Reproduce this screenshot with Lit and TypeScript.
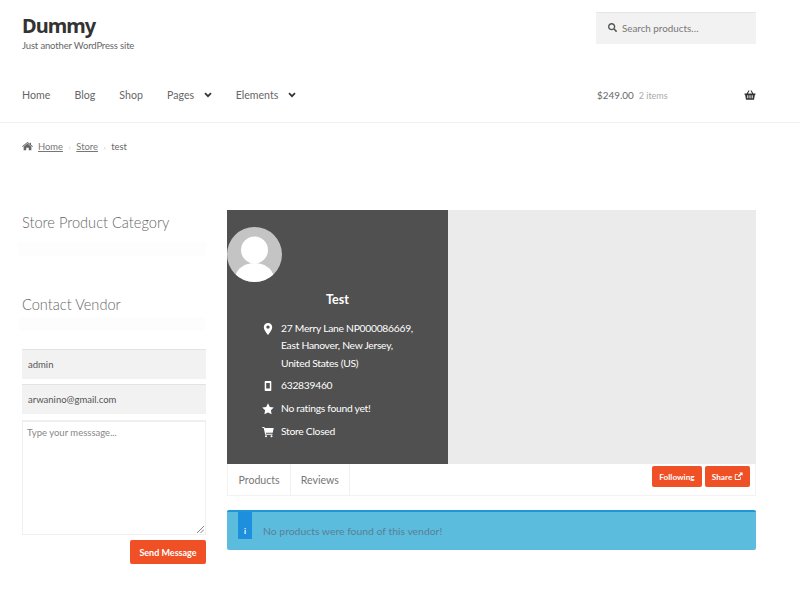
import { LitElement, html, css } from "lit";
import { customElement } from "lit/decorators.js";

@customElement("app-root")
export class AppRoot extends LitElement {
  static styles = css`
    :host { display: block; width: 800px; height: 590px; overflow: hidden; background: #fff; font-family: "Lato", "Noto Sans", sans-serif; color: #43454b; font-size: 11px; }
    * { box-sizing: border-box; }
    svg { display: block; fill: currentColor; }
    .masthead { padding: 0 44px 0 22px; border-bottom: 1px solid #f0f0f0; height: 123px; }
    .top { display: flex; justify-content: space-between; height: 72px; }
    .brand { padding-top: 12px; }
    .title { font-family: "Noto Sans", sans-serif; font-size: 20px; line-height: 27px; font-weight: 700; color: #333; letter-spacing: -0.95px; }
    .tag { font-size: 9.5px; line-height: 13px; color: #666; letter-spacing: -0.15px; }
    .search { margin-top: 12px; width: 160px; height: 32px; background: #f2f2f2; border-top: 1px solid #e6e6e6; display: flex; align-items: center; gap: 5px; padding: 0 0 2px 12px; color: #777; font-size: 9.8px; }
    .search svg { color: #555; width: 9px; height: 9px; }
    .navrow { display: flex; justify-content: space-between; align-items: center; height: 46px; }
    .nav { display: flex; align-items: center; font-size: 10.6px; color: #666; }
    .nav span { display: flex; align-items: center; }
    .nav .item { margin-right: 24.2px; }
    .nav svg { margin-left: 9.5px; color: #333; width: 8px; height: 6px; }
    .nav .item.sub { margin-right: 24px; }
    .cart { width: 160px; display: flex; align-items: center; color: #666; font-size: 9.9px; padding-left: 1px; }
    .cart .count { margin-left: 5px; color: #aaa; font-size: 9px; flex: 1; }
    .cart svg { color: #333; width: 12px; height: 10px; }
    .crumbs { padding: 17px 22px 0; height: 87px; font-size: 9.4px; color: #666; }
    .crumbs .row { display: flex; align-items: center; height: 13px; }
    .crumbs u { color: #777; }
    .crumbs .sep { margin: 0 5.5px; color: #ccc; font-size: 8px; }
    .crumbs svg { width: 11px; height: 9px; margin-right: 5px; color: #666; }
    .main { display: flex; padding: 0 44px 0 22px; gap: 21px; }
    .side { width: 184px; }
    .side h2 { margin: 0; font-weight: 300; font-size: 14.6px; line-height: 26px; color: #666; height: 25px; }
    .s1 { height: 82px; }
    .s2 { height: 57px; }
    .haze { height: 14px; margin: 7px 0 0 -4px; background: #fdfdfd; }
    .s2 .haze { margin-top: 0; }
    .input { height: 30px; background: #f2f2f2; border-top: 1px solid #e3e3e3; margin-bottom: 5px; display: flex; align-items: center; padding-left: 6px; font-size: 9.5px; color: #555; }
    .area { position: relative; height: 115px; border: 1px solid #efefef; border-top-width: 2px; margin-top: 6px; padding: 5px 4px; font-size: 9.5px; color: #888; }
    .area svg { position: absolute; right: 1px; bottom: 1px; width: 7px; height: 7px; }
    .send { display: flex; justify-content: flex-end; margin-top: 5px; }
    .btn { background: #f05025; color: #fff; border-radius: 2px; font-weight: 700; font-size: 9px; display: flex; align-items: center; justify-content: center; gap: 2px; }
    .send .btn { width: 76px; height: 24px; }
    .content { width: 529px; }
    .banner { display: flex; height: 254px; background: #ebebeb; }
    .card { width: 221px; background: #505050; color: #fff; padding-top: 17px; }
    .avatar { width: 55px; height: 55px; border-radius: 50%; background: #c4c4c4; overflow: hidden; }
    .avatar svg { width: 55px; height: 55px; fill: #fff; }
    .name { text-align: center; font-weight: 700; font-size: 12.5px; line-height: 16px; margin-top: 10px; }
    .info { list-style: none; margin: 12px 0 0; padding: 0 0 0 30px; font-size: 10.3px; line-height: 17.3px; letter-spacing: -0.27px; }
    .info li { display: flex; margin-bottom: 5.4px; }
    .info .ic { width: 24px; flex: none; display: flex; padding: 3px 0 0 0; }
    .info svg { width: 12px; height: 12px; margin-left: 5px; }
    .tabs { display: flex; justify-content: space-between; height: 32px; border: 1px solid #f2f2f2; border-top: 0; }
    .tablist { display: flex; color: #777; font-size: 10.6px; }
    .tab { padding: 0 10.5px; display: flex; align-items: center; border-right: 1px solid #f0f0f0; }
    .tab + .tab { padding: 0 10px 0 9.5px; }
    .actions { display: flex; gap: 3px; padding: 2px 5px 0 0; }
    .actions .btn { height: 21px; font-size: 8.2px; }
    .b1 { width: 50px; }
    .b2 { width: 45px; }
    .actions svg { width: 9px; height: 9px; }
    .alert { margin-top: 14px; height: 40px; background: #5bbcdd; border-top: 2px solid #1e96d8; border-radius: 2px; display: flex; color: #5a7f96; font-size: 10.4px; }
    .alert .i { margin-left: 11px; width: 14px; height: 27px; background: #1e8fdc; color: #fff; display: flex; align-items: flex-end; justify-content: center; font-size: 8px; font-weight: 700; padding-bottom: 3px; }
    .alert .t { margin-left: 11px; display: flex; align-items: center; height: 38px; }
  `;

  render() {
    return html`
      <div class="masthead">
        <div class="top">
          <div class="brand">
            <div class="title">Dummy</div>
            <div class="tag">Just another WordPress site</div>
          </div>
          <div class="search">
            <svg viewBox="0 0 512 512"><path d="M505 442.700L405.300 343c-4.500-4.500-10.600-7-17-7H372c27.600-35.300 44-79.700 44-128C416 93.100 322.900 0 208 0S0 93.100 0 208s93.100 208 208 208c48.300 0 92.700-16.400 128-44v16.300c0 6.400 2.500 12.500 7 17l99.700 99.700c9.400 9.400 24.600 9.400 33.900 0l28.300-28.300c9.400-9.400 9.400-24.600.1-34zM208 336c-70.700 0-128-57.200-128-128 0-70.700 57.200-128 128-128 70.700 0 128 57.200 128 128 0 70.700-57.200 128-128 128z"/></svg>
            <span>Search products…</span>
          </div>
        </div>
        <div class="navrow">
          <div class="nav">
            <span class="item">Home</span>
            <span class="item">Blog</span>
            <span class="item">Shop</span>
            <span class="item sub">Pages<svg viewBox="0 0 8 6"><path d="M1 1.200 4 4.200 7 1.200" fill="none" stroke="currentColor" stroke-width="1.700"/></svg></span>
            <span class="item sub">Elements<svg viewBox="0 0 8 6"><path d="M1 1.200 4 4.200 7 1.200" fill="none" stroke="currentColor" stroke-width="1.700"/></svg></span>
          </div>
          <div class="cart">
            <span>$249.00</span><span class="count">2 items</span>
            <svg viewBox="0 0 12 10"><path d="M4.700.300 2.600 3.500H.5v1.200h.6l.9 5h8l.9-5h.6V3.500H9.400L7.300.300l-.8.500 1.600 2.700H3.900L5.500.800zM3.300 5.300h1v3h-1zm2.200 0h1v3h-1zm2.200 0h1v3h-1z" fill-rule="evenodd"/></svg>
          </div>
        </div>
      </div>
      <div class="crumbs">
        <div class="row">
          <svg viewBox="0 0 12 10"><path d="M6 1.800 1.700 5.300V9c0 .2.100.3.300.3h2.600V6.500h2.800v2.800H10c.2 0 .3-.1.300-.3V5.300zM12 4.700 9.900 3V.8H8.700v1.200L6 0 0 4.700l.6.800L6 1.100l5.400 4.400z"/></svg>
          <u>Home</u><span class="sep">›</span><u>Store</u><span class="sep">›</span><span>test</span>
        </div>
      </div>
      <div class="main">
        <div class="side">
          <div class="s1"><h2>Store Product Category</h2><div class="haze"></div></div>
          <div class="s2"><h2>Contact Vendor</h2><div class="haze"></div></div>
          <div class="fields">
            <div class="input">admin</div>
            <div class="input">arwanino@gmail.com</div>
            <div class="area">Type your messsage...
              <svg viewBox="0 0 7 7"><path d="M0 7 7 0M3.500 7 7 3.500" stroke="#666" stroke-width=".8" fill="none"/></svg>
            </div>
            <div class="send"><div class="btn">Send Message</div></div>
          </div>
        </div>
        <div class="content">
          <div class="banner">
            <div class="card">
              <div class="avatar"><svg viewBox="0 0 55 55"><circle cx="27.500" cy="23" r="13.500"/><path d="M8 50c2-9 10-14 19.500-14S45 41 47 50c-5 4-12 6-19.500 6S13 54 8 50z"/></svg></div>
              <div class="name">Test</div>
              <ul class="info">
                <li><span class="ic"><svg viewBox="0 0 12 12"><path d="M6 0C3.500 0 1.800 1.900 1.800 4.200 1.800 7 6 12 6 12s4.200-5 4.200-7.800C10.200 1.900 8.500 0 6 0zm0 5.800a1.700 1.700 0 1 1 0-3.400 1.700 1.700 0 0 1 0 3.400z"/></svg></span><span>27 Merry Lane NP000086669,<br>East Hanover, New Jersey,<br>United States (US)</span></li>
                <li><span class="ic"><svg viewBox="0 0 12 12"><path fill-rule="evenodd" d="M3.500 1h5c.5 0 .8.300.8.800v8.400c0 .5-.3.800-.8.800h-5c-.5 0-.8-.3-.8-.8V1.800c0-.5.300-.8.800-.8zm.7 2v5.500h3.600V3z"/></svg></span><span>632839460</span></li>
                <li><span class="ic"><svg viewBox="0 0 12 12"><path d="M6 .3l1.800 3.600 4 .6-2.900 2.800.7 4L6 9.400l-3.600 1.900.7-4L.2 4.500l4-.6z"/></svg></span><span>No ratings found yet!</span></li>
                <li><span class="ic"><svg viewBox="0 0 12 12"><path d="M.3 1h2l.4 1h9l-1 4.800H3.800l.2 1h6.500v1H3.200L1.700 2H.3z"/><circle cx="4" cy="10.300" r="1"/><circle cx="9.500" cy="10.300" r="1"/></svg></span><span>Store Closed</span></li>
              </ul>
            </div>
          </div>
          <div class="tabs">
            <div class="tablist"><div class="tab">Products</div><div class="tab">Reviews</div></div>
            <div class="actions">
              <div class="btn b1">Following</div>
              <div class="btn b2">Share<svg viewBox="0 0 12 12"><path d="M9 6.500v3c0 .5-.4 1-1 1H2c-.6 0-1-.5-1-1v-6c0-.6.400-1 1-1h3.500v1H2.200v5.800H8V6.500zM7 .5h4.500V5L10 3.500 6.500 7 5 5.500 8.500 2z"/></svg></div>
            </div>
          </div>
          <div class="alert">
            <div class="i">i</div>
            <div class="t">No products were found of this vendor!</div>
          </div>
        </div>
      </div>
    `;
  }
}
